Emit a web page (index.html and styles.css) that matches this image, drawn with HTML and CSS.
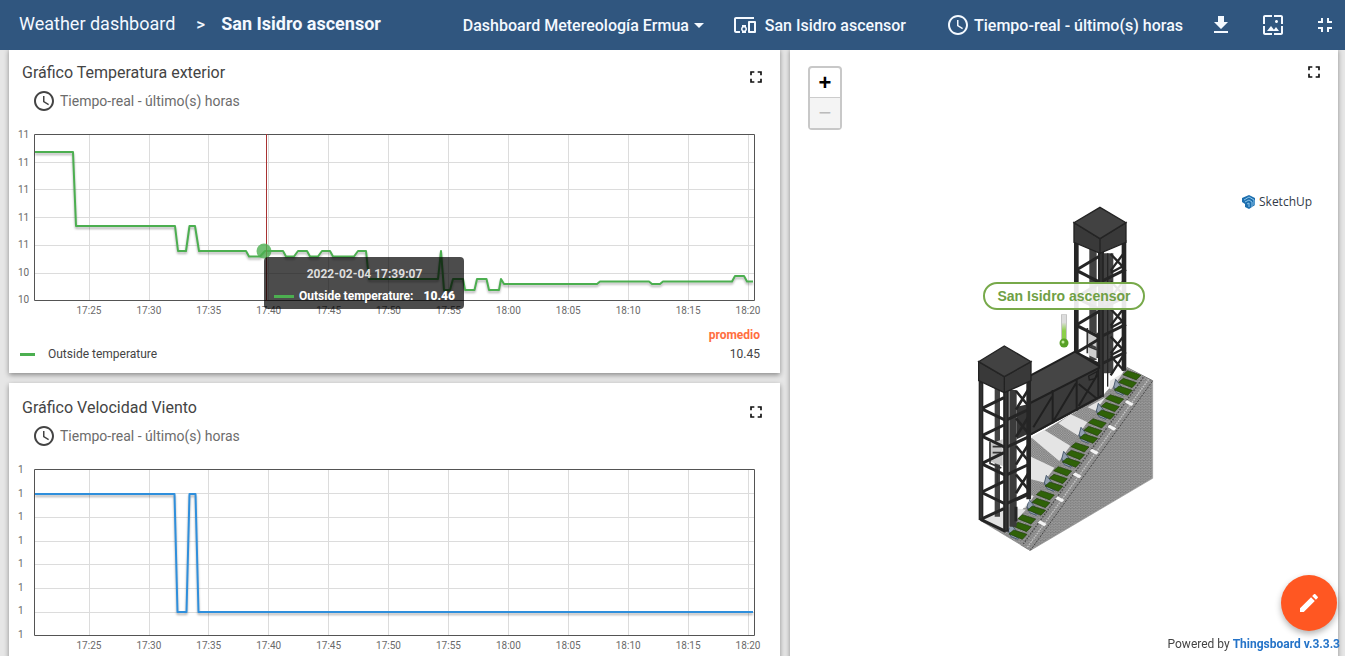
FILE: index.html
```html
<!DOCTYPE html>
<html lang="es">
<head>
<meta charset="utf-8">
<title>San Isidro ascensor</title>
<link rel="stylesheet" href="styles.css">
</head>
<body>
<svg class="defs" aria-hidden="true">
  <symbol id="i-clock" viewBox="0 0 24 24"><path d="M11.99 2C6.47 2 2 6.48 2 12s4.47 10 9.99 10C17.52 22 22 17.52 22 12S17.52 2 11.99 2zM12 20c-4.42 0-8-3.58-8-8s3.58-8 8-8 8 3.58 8 8-3.58 8-8 8zm.5-13H11v6l5.250 3.150.75-1.230-4.500-2.670z"/></symbol>
  <symbol id="i-full" viewBox="0 0 24 24"><path d="M7 14H5v5h5v-2H7v-3zm-2-4h2V7h3V5H5v5zm12 7h-3v2h5v-5h-2v3zM14 5v2h3v3h2V5h-5z"/></symbol>
</svg>

<header class="topbar">
  <nav class="crumbs">
    <a href="#">Weather dashboard</a>
    <span class="sep">&gt;</span>
    <a href="#" class="current">San Isidro ascensor</a>
  </nav>
  <div class="state">
    <div class="picker">
      <select aria-label="Dashboard"><option>Dashboard Metereología Ermua</option></select>
      <svg class="caret" viewBox="0 0 10 5"><path d="M0 0h10L5 5z"/></svg>
    </div>
    <button class="entity" type="button">
      <svg class="icon" viewBox="0 0 24 24"><path d="M3 6h18V4H3c-1.100 0-2 .9-2 2v12c0 1.100.9 2 2 2h4v-2H3V6zm10 6H9v1.780c-.61.55-1 1.330-1 2.220s.39 1.670 1 2.220V20h4v-1.780c.61-.55 1-1.340 1-2.220s-.39-1.670-1-2.220V12zm-2 5.500c-.83 0-1.500-.67-1.500-1.500s.67-1.500 1.500-1.500 1.500.67 1.500 1.500-.67 1.500-1.500 1.500zM22 8h-6c-.5 0-1 .5-1 1v10c0 .5.5 1 1 1h6c.5 0 1-.5 1-1V9c0-.5-.5-1-1-1zm-1 10h-4v-8h4v8z"/></svg>
      San Isidro ascensor
    </button>
    <button class="window" type="button"><svg class="icon"><use href="#i-clock"/></svg>Tiempo-real - último(s) horas</button>
    <div class="tools">
      <button type="button" aria-label="Exportar"><svg class="icon" viewBox="0 0 24 24"><path d="M19 9h-4V3H9v6H5l7 7 7-7zM5 18v2h14v-2H5z"/></svg></button>
      <button type="button" aria-label="Imagen"><svg class="icon" viewBox="0 0 24 24"><path d="M4 4h7V2H4c-1.100 0-2 .9-2 2v7h2V4zm6 9l-4 5h12l-3-4-2.030 2.710L10 13zm7-4.500c0-.83-.67-1.500-1.500-1.500S14 7.670 14 8.500s.67 1.500 1.500 1.500S17 9.330 17 8.500zM20 2h-7v2h7v7h2V4c0-1.100-.9-2-2-2zm0 18h-7v2h7c1.100 0 2-.9 2-2v-7h-2v7zM4 13H2v7c0 1.100.9 2 2 2h7v-2H4v-7z"/></svg></button>
      <button type="button" aria-label="Salir de pantalla completa"><svg class="icon" viewBox="0 0 24 24"><path d="M5 16h3v3h2v-5H5v2zm3-8H5v2h5V5H8v3zm6 11h2v-3h3v-2h-5v5zm2-11V5h-2v5h5V8h-3z"/></svg></button>
    </div>
  </div>
</header>

<main class="board">
  <div class="column">
    <section class="card chart-card">
      <div class="card-head">
        <h2>Gráfico Temperatura exterior</h2>
        <button class="expand" type="button" aria-label="Pantalla completa"><svg><use href="#i-full"/></svg></button>
      </div>
      <div class="range"><svg><use href="#i-clock"/></svg>Tiempo-real - último(s) horas</div>
      <div class="chart">
        <div class="y-axis"><span>11</span><span>11</span><span>11</span><span>11</span><span>11</span><span>10</span><span>10</span></div>
        <div class="plot">
          <svg viewBox="34 134 721 167" preserveAspectRatio="none">
            <path class="grid" d="M89.500 134v167M149.500 134v167M208.500 134v167M268.500 134v167M328.500 134v167M388.500 134v167M448.500 134v167M508.500 134v167M568.500 134v167M628.500 134v167M688.500 134v167M748.500 134v167M34 162.500h721M34 189.500h721M34 217.500h721M34 245.500h721M34 273.500h721"/>
            <path class="frame" d="M34.500 134.500h720v166h-720z"/>
            <path class="line temp" d="M35 152H73L76 226H175L178 251H186L189.500 226H195L199 251H246L249 256.500H260L265 251H283L286 256.500H294L298 251H307L310 256.500H318L322 251H330L333 256.500H354L358 251H366L369 279H438L441 251L444 290H450L453 279H463L465 290H474.500L477 279H486.500L489 290H499L501 279L504 284H597L600 281.500H649L652 284H660L663 281.500H732L735 276H744L747 281.500H753"/>
            <path class="cursor" d="M266.500 134v167"/>
            <circle class="dot" cx="264" cy="251" r="7.500"/>
          </svg>
          <div class="tooltip">
            <div class="date">2022-02-04 17:39:07</div>
            <div class="entry"><i></i>Outside temperature:<b>10.46</b></div>
          </div>
        </div>
        <div class="x-axis"><span>17:25</span><span>17:30</span><span>17:35</span><span>17:40</span><span>17:45</span><span>17:50</span><span>17:55</span><span>18:00</span><span>18:05</span><span>18:10</span><span>18:15</span><span>18:20</span></div>
      </div>
      <table class="legend">
        <thead><tr><td></td><th scope="col">promedio</th></tr></thead>
        <tbody><tr><th scope="row"><i></i>Outside temperature</th><td>10.45</td></tr></tbody>
      </table>
    </section>

    <section class="card chart-card">
      <div class="card-head">
        <h2>Gráfico Velocidad Viento</h2>
        <button class="expand" type="button" aria-label="Pantalla completa"><svg><use href="#i-full"/></svg></button>
      </div>
      <div class="range"><svg><use href="#i-clock"/></svg>Tiempo-real - último(s) horas</div>
      <div class="chart">
        <div class="y-axis"><span>1</span><span>1</span><span>1</span><span>1</span><span>1</span><span>1</span><span>1</span><span>1</span></div>
        <div class="plot">
          <svg viewBox="34 469 721 167" preserveAspectRatio="none">
            <path class="grid" d="M89.500 469v167M149.500 469v167M208.500 469v167M268.500 469v167M328.500 469v167M388.500 469v167M448.500 469v167M508.500 469v167M568.500 469v167M628.500 469v167M688.500 469v167M748.500 469v167M34 493.500h721M34 517.500h721M34 541.500h721M34 564.500h721M34 588.500h721M34 612.500h721"/>
            <path class="frame" d="M34.500 469.500h720v166h-720z"/>
            <path class="line wind" d="M35 494H174.500L177.500 612H186.500L189.500 494H195.500L198.500 612H753"/>
          </svg>
        </div>
        <div class="x-axis"><span>17:25</span><span>17:30</span><span>17:35</span><span>17:40</span><span>17:45</span><span>17:50</span><span>17:55</span><span>18:00</span><span>18:05</span><span>18:10</span><span>18:15</span><span>18:20</span></div>
      </div>
    </section>
  </div>

  <section class="card map-card">
    <svg class="scene" viewBox="790 48 548 608" role="img" aria-label="Modelo del ascensor">
      <defs>
        <pattern id="brick" width="10" height="8" patternUnits="userSpaceOnUse"><rect width="10" height="8" fill="#b4b4b4"/><path d="M0 1.500h10M0 5.500h10" stroke="#747474" stroke-width="1.800"/><path d="M2 1v4M7 5v4" stroke="#606060" stroke-width="2"/></pattern>
        <pattern id="tread" width="7" height="7" patternUnits="userSpaceOnUse"><rect width="7" height="7" fill="#a0a0a0"/><path d="M0 0l7 7M0 7l7-7" stroke="#666" stroke-width="1"/></pattern>
        <g id="bay-r">
          <path d="M345 0l75 36 78-38M349 0l70-42M356 4l64 34" stroke-width="9"/>
          <path d="M452-48l42 44M494-54l-42 56M452 8l42-22" stroke-width="7"/>
        </g>
        <g id="bay-l">
          <path d="M62 0l75 36 72-34M66 0l66-32" stroke-width="9"/>
          <path d="M168-52l40 48M206-58l-38 62" stroke-width="8"/>
        </g>
        <path id="step" d="M-28-6l14-12 40 13-14 15z" fill="#2f6208" stroke="#1f3c0a" stroke-width="2"/>
        <g id="flight">
          <path d="M-14 30l6-24 30 38-8 10-20-8zM-14 30l28 20" fill="#93a0b0" stroke="#4c5d70" stroke-width="3"/>
          <use href="#step" x="42" y="-2"/><use href="#step" x="29" y="21"/><use href="#step" x="16" y="44"/>
        </g>
        <path id="pad" d="M-13-5l20 11 7-7-20-11z" fill="#f4f4f4"/>
        <linearGradient id="tube" x1="0" x2="0" y1="0" y2="1"><stop offset=".3" stop-color="#ddd"/><stop offset=".6" stop-color="#8ccf4a"/></linearGradient>
      </defs>
      <g transform="translate(960 340) scale(.3333)">
        <!-- terraces and retaining wall -->
        <path d="M205 300L430 165 500 85 578 122 210 632 57 540 130 500 205 480z" fill="url(#tread)"/>
        <path d="M213 292l40-22 85 52-34 46zM295 250l37-27 62 29-34 38zM383 202l57-32 2 18-26 28zM213 350l84 40-36 40-48-12zM448 146l2-24 38-22 12 12-36 38zM185 500l4-24 28-10 14 12-32 28zM138 572v-18l36-16 14 10-38 28z" fill="#e4e4e4"/>
        <path d="M213 280L430 165" stroke="#222" stroke-width="8"/>
        <path d="M578 122V415L210 632V600z" fill="url(#brick)" stroke="#999" stroke-width="2"/>
        <path d="M500 84l45 24L184 614l-46-30z" fill="url(#brick)"/>
        <path d="M545 108l33 14L210 632l-28-16z" fill="url(#brick)"/>
        <path d="M566 118L202 622" stroke="#c2c2c2" stroke-width="4" stroke-dasharray="5 3" fill="none"/>
        <path d="M577 124L212 630" stroke="#444" stroke-width="3" stroke-dasharray="6 4" fill="none"/>
        <path d="M550 112L190 612" stroke="#4c4c4c" stroke-width="4" stroke-dasharray="5 4" fill="none"/>
        <use href="#flight" x="475" y="112"/><use href="#flight" x="423" y="184"/><use href="#flight" x="371" y="256"/><use href="#flight" x="319" y="328"/><use href="#flight" x="267" y="400"/><use href="#flight" x="215" y="472"/><use href="#flight" x="159" y="544"/>
        <path d="M500 82l78 40" stroke="#777" stroke-width="3"/>
        <use href="#pad" x="507" y="192"/><use href="#pad" x="455" y="266"/><use href="#pad" x="402" y="338"/><use href="#pad" x="351" y="409"/><use href="#pad" x="299" y="481"/><use href="#pad" x="246" y="553"/>
        <!-- rear tower -->
        <path d="M349-290l72 36 70-36V88l-65 45-77-120z" fill="#fff"/>
        <path d="M388-275h22V60h-22zM432-260h28V100h-28z" fill="#414141"/>
        <path d="M382-30l30 12v40l-30-14zM386 18l26 10v30l-26-12z" fill="#ccc"/>
        <path d="M382-36v76M412-22v76M382 18l30 12" stroke="#333" stroke-width="5" fill="none"/>
        <g fill="none" stroke="#252525">
          <use href="#bay-r" y="-210"/><use href="#bay-r" y="-128"/><use href="#bay-r" y="-45"/><use href="#bay-r" y="38"/>
          <path d="M452 48l40 44M494 40l-42 66" stroke-width="7"/>
          <path d="M349-300V40M492-300V92" stroke-width="14"/><path d="M423-270V170" stroke-width="18"/>
          <path d="M443-260V140" stroke-width="4"/>
        </g>
        <path d="M423-270V165" stroke="#4b4b4b" stroke-width="2"/>
        <path d="M342-352l78 48V-260l-78-33zM498-352l-78 48v44l78-33z" fill="#393939" stroke="#222" stroke-width="4"/>
        <path d="M420-398l78 46-78 48-78-48z" fill="#424242" stroke="#242424" stroke-width="4"/>
        <!-- walkway -->
        <path d="M205 110L345 35l75 45v95L205 290z" fill="#3a3a3a"/>
        <path d="M205 110L345 35l75 45L205 190z" fill="#454545"/>
        <g fill="none" stroke="#202020"><path d="M205 192L420 82M205 287L420 170M205 110L345 35l75 45" stroke-width="6"/><path d="M278 150v100M350 118v95M415 85v85M282 240l66-110M220 262l56-92M356 198l56-94M356 132l56 45" stroke-width="6"/><path d="M386 108l26-14-6 22-18 4z" stroke-width="4"/></g>
        <!-- front tower -->
        <path d="M62 120l75 36 70-32v360l-64 80-81-24z" fill="#fff"/>
        <path d="M62 535l66-36 70 10-62 66z" fill="#e2e2e2"/>
        <path d="M148 150h22v410h-22z" fill="#3b3b3b"/><path d="M104 140h16v390h-16z" fill="#434343"/>
        <path d="M88 312l40-14v80l-40-14z" fill="#c6c6c6"/>
        <path d="M170 200l38-8v88l-38 18z" fill="#353535"/>
        <path d="M90 305v65l34 14M98 320h26M98 338h26M112 380v50" stroke="#333" stroke-width="5" fill="none"/>
        <g fill="none" stroke="#252525">
          <use href="#bay-l" y="205"/><use href="#bay-l" y="287"/><use href="#bay-l" y="370"/><use href="#bay-l" y="456"/>
          <path d="M62 538l75 36M62 538l70-32M168 480l36-16M168 500v44" stroke-width="9"/>
          <path d="M63 115V540M206 115V478" stroke-width="14"/><path d="M138 140V575" stroke-width="17"/>
        </g>
        <path d="M138 150V570M63 130V535" stroke="#484848" stroke-width="2"/>
        <path d="M56 65l77 45v48l-77-36zM213 65l-80 45v48l80-36z" fill="#393939" stroke="#222" stroke-width="4"/>
        <path d="M133 18l80 47-80 45-77-45z" fill="#424242" stroke="#242424" stroke-width="4"/>
      </g>
      <g transform="translate(1242 195)">
        <path d="M0 3l7-3 6 3v7l-6 4-4-2v-3l-3-2z" fill="#1d6fae"/>
        <path d="M2 5l5-3 5 3v5M3 7l4-2 3 2v5M5 9l2-1v4" fill="none" stroke="#8cc4ea"/>
        <text class="brand" x="17" y="11">SketchUp</text>
      </g>
    </svg>
    <div class="marker">
      <span>San Isidro ascensor</span>
      <svg viewBox="0 0 10 34"><rect x="2.500" y="0" width="5" height="28" rx="1" fill="url(#tube)" stroke="#c4c4c4"/><circle cx="5" cy="29" r="4.500" fill="#57a126"/><circle cx="4" cy="28" r="1.500" fill="#c5eca0"/></svg>
    </div>
    <div class="zoom"><button type="button">+</button><button type="button" disabled>−</button></div>
    <button class="expand" type="button" aria-label="Pantalla completa"><svg><use href="#i-full"/></svg></button>
  </section>
</main>

<button class="fab" type="button" aria-label="Editar"><svg viewBox="0 0 24 24"><path d="M3 17.250V21h3.750L17.810 9.940l-3.750-3.750L3 17.250zM20.710 7.040c.39-.39.39-1.020 0-1.410l-2.340-2.340c-.39-.39-1.020-.39-1.410 0l-1.830 1.830 3.750 3.750 1.830-1.830z"/></svg></button>
<footer class="powered">Powered by <a href="#">Thingsboard v.3.3.3</a></footer>
</body>
</html>
```
FILE: styles.css
```css
* { box-sizing: border-box; }
body {
  margin: 0;
  height: 100vh;
  overflow: hidden;
  display: flex;
  flex-direction: column;
  background: #e6e6e6;
  font-family: Roboto, "Liberation Sans", sans-serif;
  color: #444;
}
button, select { font: inherit; color: inherit; background: none; border: 0; padding: 0; }
button { cursor: pointer; }
a { color: inherit; text-decoration: none; }
h2 { margin: 0; font-size: 16px; font-weight: 400; line-height: 24px; }
.defs { position: absolute; width: 0; height: 0; }
svg { fill: currentColor; flex: none; }

/* Top bar */
.topbar {
  position: relative;
  z-index: 2;
  height: 50px;
  flex: none;
  display: flex;
  align-items: center;
  justify-content: space-between;
  padding: 0 8px 0 19px;
  background: #30567f;
  color: #f4f9ff;
  white-space: nowrap;
}
.crumbs { display: flex; align-items: center; font-size: 18px; line-height: 22px; padding-bottom: 2px; }
.sep { margin: 0 16px 0 21px; font-size: 17px; font-weight: 500; }
.current { font-weight: 700; }
.state { display: flex; align-items: center; font-size: 16px; font-weight: 500; }
.icon { width: 24px; height: 24px; }
.picker { display: flex; align-items: center; margin-right: 29px; }
.picker select { appearance: none; }
.caret { width: 10px; height: 5px; margin-left: 4px; }
.entity, .window { display: flex; align-items: center; }
.entity { gap: 8px; margin-right: 40px; }
.window { gap: 4px; margin-right: 26px; }
.tools { display: flex; gap: 28px; }
.tools button { display: flex; }

/* Dashboard grid */
.board {
  flex: 1;
  min-height: 0;
  margin-top: -2px;
  padding: 0 7px 0 9px;
  display: grid;
  grid-template-columns: 771fr 548fr;
  gap: 10px;
}
.column { display: flex; flex-direction: column; gap: 10px; min-width: 0; }
.card { position: relative; background: #fff; box-shadow: 0 2px 5px rgba(0, 0, 0, .4); }
.chart-card { padding: 13px 0 9px; }
.card-head { display: flex; justify-content: space-between; padding: 0 14px 0 13px; }
.expand { display: flex; width: 20px; height: 20px; color: #111; }
.expand svg { width: 20px; height: 20px; }
.card-head .expand { margin-top: 6px; margin-bottom: -2px; }
.range {
  display: flex;
  align-items: center;
  gap: 4px;
  height: 24px;
  margin-top: 4px;
  padding-left: 23px;
  font-size: 14px;
  color: #6c6c6c;
}
.range svg { width: 24px; height: 24px; color: #444; }

/* Charts */
.chart {
  display: grid;
  grid-template-columns: 16px 1fr;
  margin-top: 21px;
  padding: 0 25px 0 9px;
  font-size: 10px;
  line-height: 12px;
  color: #6a6a6a;
}
.y-axis { display: flex; flex-direction: column; justify-content: space-between; margin: -5px 0; }
.plot { position: relative; }
.plot > svg { display: block; width: 100%; height: 167px; overflow: visible; }
.plot path { fill: none; vector-effect: non-scaling-stroke; }
.grid { stroke: #dcdcdc; }
.frame { stroke: #545454; }
.line { stroke-width: 2; stroke-linejoin: round; filter: drop-shadow(0 2px 1px rgba(0, 0, 0, .3)); }
.temp { stroke: #4caf50; }
.wind { stroke: #2f8fdc; }
.cursor { stroke: #a83232; }
.dot { fill: #4caf50; opacity: .8; }
.x-axis {
  grid-column: 1 / -1;
  display: grid;
  grid-template-columns: repeat(12, 1fr);
  margin: 4px -23px 0 41px;
  text-align: center;
}
.tooltip {
  position: absolute;
  left: 230px;
  top: 123px;
  width: 200px;
  height: 52px;
  padding: 9px 9px 5px 10px;
  background: rgba(0, 0, 0, .7);
  border-radius: 4px;
  font-size: 12px;
  font-weight: 700;
  color: #fff;
}
.date { line-height: 16px; text-align: center; color: #ddd; }
.entry { display: flex; align-items: center; margin-top: 6px; line-height: 16px; white-space: nowrap; }
.entry i { width: 20px; height: 3px; margin-right: 5px; background: #4caf50; }
.entry b { margin-left: auto; }
.legend {
  width: 100%;
  margin-top: 9px;
  padding: 0 20px 0 11px;
  border-spacing: 0;
  font-size: 12px;
  line-height: 19px;
}
.legend th, .legend td { padding: 0; text-align: right; }
.legend thead th { color: #ff6e40; font-weight: 700; }
.legend tbody th { text-align: left; font-weight: 400; }
.legend i { display: inline-block; width: 15px; height: 3px; margin-right: 13px; background: #4caf50; vertical-align: middle; }

/* Map */
.map-card { min-width: 0; overflow: hidden; }
.scene { display: block; width: 100%; }
.brand { font: 500 12px "Open Sans", sans-serif; fill: #333b48; }
.marker {
  position: absolute;
  top: 234px;
  left: 0;
  right: 0;
  display: flex;
  flex-direction: column;
  align-items: center;
  gap: 4px;
}
.marker span {
  padding: 0 12px;
  border: 2px solid #77a94a;
  border-radius: 14px;
  background: rgba(255, 255, 255, .9);
  color: #6f9f45;
  font: 700 14px/24px "Liberation Sans", sans-serif;
}
.marker svg { width: 10px; height: 34px; }
.zoom {
  position: absolute;
  left: 18px;
  top: 18px;
  width: 34px;
  border: 2px solid #c8c8c8;
  border-radius: 4px;
  background: #fff;
}
.zoom button { display: block; width: 30px; height: 29px; font: 700 22px/30px "Liberation Sans", sans-serif; color: #000; }
.zoom button + button { height: 31px; border-top: 1px solid #ccc; background: #f4f4f4; color: #bbb; font-weight: 400; }
.map-card .expand { position: absolute; right: 14px; top: 14px; }

.fab {
  position: fixed;
  right: 8px;
  bottom: 25px;
  width: 56px;
  height: 56px;
  display: flex;
  align-items: center;
  justify-content: center;
  border-radius: 50%;
  background: #ff5722;
  color: #fff;
  box-shadow: 0 3px 6px rgba(0, 0, 0, .3);
}
.fab svg { width: 24px; height: 24px; }
.powered { position: fixed; right: 5px; bottom: 4px; font-size: 12px; line-height: 16px; }
.powered a { color: #2473c8; font-weight: 700; }
```
